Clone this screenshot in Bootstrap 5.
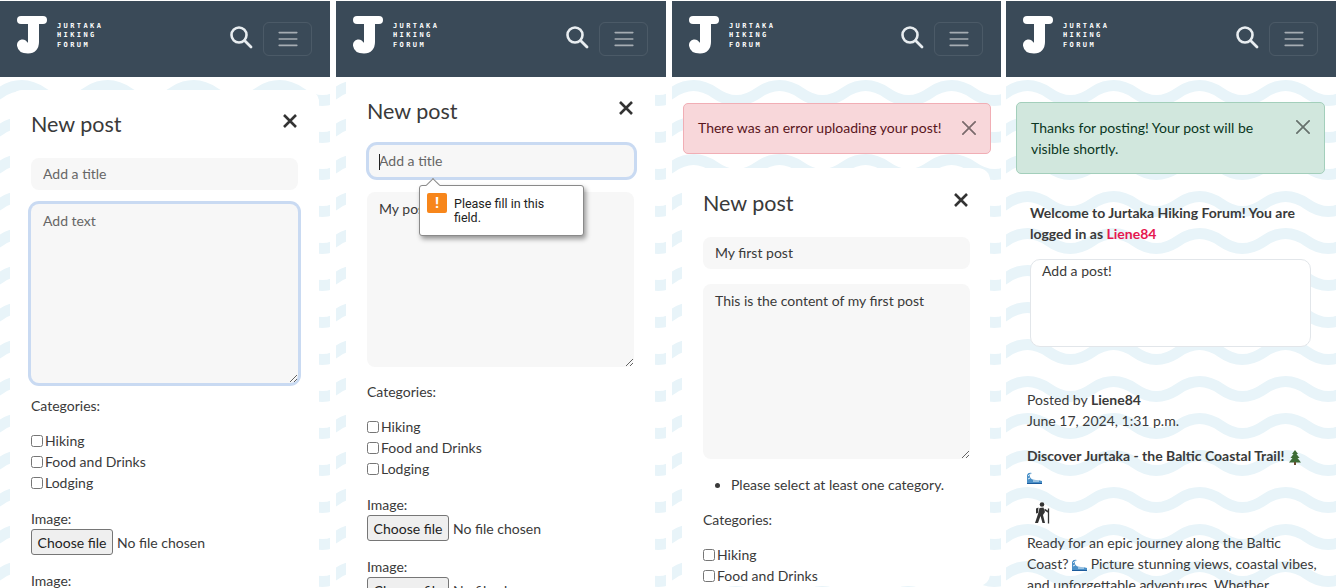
<!DOCTYPE html>
<html lang="en">
<head>
    <meta charset="UTF-8">
    <meta name="viewport" content="width=device-width, initial-scale=1.0">
    <title>Jurtaka Hiking Forum</title>
    <link href="https://cdn.jsdelivr.net/npm/bootstrap@5.3.0/dist/css/bootstrap.min.css" rel="stylesheet">
    <style>
        html, body { height: 588px; overflow: hidden; }
        body { font-family: Lato, "Liberation Sans", sans-serif; font-size: 14px; line-height: 21px; color: #3a3a3a; background: #fff; }
        .shots { display: flex; height: 588px; padding-top: 1px; }
        .phone { width: 330px; flex: none; overflow: hidden; margin-right: 6px; position: relative;
            background-color: #fff;
            background-image: url("data:image/svg+xml,%3Csvg xmlns='http://www.w3.org/2000/svg' width='86' height='37'%3E%3Cpath d='M-43 18C-29 28 -14 28 0 18C14 8 29 8 43 18S72 28 86 18S115 8 129 18' fill='none' stroke='%23e8f4f9' stroke-width='11'/%3E%3C/svg%3E");
            background-position: 0 0; }
        .phone:nth-child(3) { width: 329px; margin-right: 5px; }
        .phone:last-child { margin-right: 0; }
        .topbar { height: 76px; background: #3a4a58; padding: 0 18px 0 17px; }
        .logo-mark { margin-top: -8px; }
        .logo-word { font-family: "DejaVu Sans Mono", monospace; font-weight: 700; font-size: 7px; line-height: 9.5px; letter-spacing: 2.4px; color: #fff; margin: 0 0 6px 8px; }
        .search-btn { margin: 0 10px 4px 0; }
        .menu-btn { font-size: 1rem; width: 49px; padding: 4px 11px; border-color: rgba(255,255,255,.09); border-radius: 6px; }
        .sheet { margin: 13px 11px 0 10px; background: #fff; border-radius: 12px; padding: 21px 21px 0; }
        .sheet-up { margin-top: 0; padding-top: 21px; border-radius: 0; }
        .sheet-low { margin-top: 14px; padding-top: 22px; }
        .sheet-title { font-size: 21.5px; line-height: 26px; font-weight: 400; margin: 0 0 21px; color: #3a3a3a; }
        .sheet-up .sheet-title { margin-bottom: 18px; }
        .sheet-close { margin-top: 2px; }
        .field { background: #f7f7f7; border: 0; border-radius: 8px; font-size: 14px; line-height: 21px; padding: 5px 12px 6px; color: #3a3a3a; height: 32px; width: 267px; }
        .field::placeholder { color: #666; opacity: 1; }
        textarea.field { display: block; resize: vertical; height: 175px; margin-top: 15px; padding-top: 6px; }
        .field-focus { box-shadow: 0 0 0 3px #c9daf2; background: #f7f7f7; }
        .field-text { height: 179px !important; margin: 14px 0 -2px !important; }
        .sheet-up .field-ring { height: 32px; margin: 3px 0 0 2px; width: 265px; padding-left: 10px; }
        .sheet-up textarea.field { margin-top: 15px; }
        .section-label { margin: 14px 0 14px; }
        .cat-row { display: flex; align-items: center; gap: 2px; height: 21px; }
        .cat-row input { margin: 0; width: 12px; height: 12px; }
        .image-row { margin-top: 15px; }
        .file-pick { display: flex; align-items: center; gap: 4px; }
        .file-btn { width: 82px; height: 26px; padding: 0; background: #efefef; border: 1px solid #767676; border-radius: 3px; font-size: 14px; color: #222; }
        .errors { margin: 15px 0 0; padding-left: 28px; }
        .caret-bar { position: absolute; left: 43px; top: 153px; width: 1px; height: 16px; background: #222; z-index: 3; }
        .tip { position: absolute; left: 83px; top: 184px; width: 165px; height: 51px; background: #fff; border: 1px solid #8a8a8a; border-radius: 3px; box-shadow: 2px 3px 5px rgba(0,0,0,.4); font-family: Roboto, "Liberation Sans", sans-serif; font-size: 12.5px; line-height: 14px; color: #222; padding: 11px 30px 0 34px; z-index: 4; }
        .tip::before { content: ""; position: absolute; left: 8px; top: -6px; width: 10px; height: 10px; background: #fff; border-left: 1px solid #8a8a8a; border-top: 1px solid #8a8a8a; transform: rotate(45deg); }
        .tip-mark { position: absolute; left: 7px; top: 7px; width: 20px; height: 20px; background: #f7861b; border-radius: 2px; color: #fff; font-weight: 700; font-size: 15px; line-height: 20px; text-align: center; }
        .note { border-radius: 5px; font-size: 14px; line-height: 21px; margin: 0; padding: 13px 48px 15px 14px; }
        .note-red { margin: 26px 10px 0 11px; color: #58151c; }
        .note-green { margin: 25px 11px 0 10px; padding-top: 14px; padding-bottom: 14px; color: #0a3622; }
        .note .btn-close { padding: 17px 14px; font-size: 14px; }
        .feed { padding: 0 14px 0 21px; }
        .welcome { margin: 28px 0 0 3px; font-weight: 700; width: 280px; }
        .welcome span { color: #e6174f; }
        .post-box { display: block; background: #fff; border: 1px solid #e2e6ea; border-radius: 10px; width: 281px; height: 88px; margin: 15px 0 42px 3px; padding: 0 11px; resize: none; font-size: 14px; }
        .post-box::placeholder { color: #3a3a3a; opacity: 1; }
        .post-text { margin: 0; width: 290px; }
        .post-title { margin: 14px 0 0; font-weight: 700; width: 290px; }
        .hiker { display: block; margin: 15px 0 8px 7px; }
    </style>
</head>
<body>
    <div class="shots">
        <!-- empty form -->
        <div class="phone">
            <nav class="topbar d-flex align-items-center navbar-dark">
                <svg class="logo-mark" width="32" height="38" viewBox="0 0 32 38"><path d="M4 4H26" stroke="#fff" stroke-width="8" stroke-linecap="round"/><path d="M16.500 6V26Q16.500 32 11 32Q6 32 5.500 29" fill="none" stroke="#fff" stroke-width="11" stroke-linecap="round"/></svg>
                <div class="logo-word">JURTAKA<br>HIKING<br>FORUM</div>
                <svg class="search-btn ms-auto" width="24" height="24" viewBox="0 0 24 24"><circle cx="10" cy="10" r="7.500" fill="none" stroke="#e8edf0" stroke-width="2.600"/><path d="M15.500 15.500L22 22" stroke="#e8edf0" stroke-width="2.800" stroke-linecap="round"/></svg>
                <button class="navbar-toggler menu-btn" type="button"><span class="navbar-toggler-icon"></span></button>
            </nav>
            <div class="sheet">
                <div class="d-flex justify-content-between align-items-start">
                    <h2 class="sheet-title">New post</h2>
                    <svg class="sheet-close" width="16" height="16" viewBox="0 0 16 16"><path d="M2 2L14 14M14 2L2 14" stroke="#333" stroke-width="2.600"/></svg>
                </div>
                <input class="field" placeholder="Add a title">
                <textarea class="field field-focus field-text" placeholder="Add text"></textarea>
                <div class="section-label">Categories:</div>
                <label class="cat-row"><input type="checkbox">Hiking</label>
                <label class="cat-row"><input type="checkbox">Food and Drinks</label>
                <label class="cat-row"><input type="checkbox">Lodging</label>
                <div class="image-row">Image:<div class="file-pick"><button type="button" class="file-btn">Choose file</button>No file chosen</div></div>
                <div class="image-row">Image:<div class="file-pick"><button type="button" class="file-btn">Choose file</button>No file chosen</div></div>
            </div>
        </div>

        <!-- browser validation tooltip -->
        <div class="phone">
            <nav class="topbar d-flex align-items-center navbar-dark">
                <svg class="logo-mark" width="32" height="38" viewBox="0 0 32 38"><path d="M4 4H26" stroke="#fff" stroke-width="8" stroke-linecap="round"/><path d="M16.500 6V26Q16.500 32 11 32Q6 32 5.500 29" fill="none" stroke="#fff" stroke-width="11" stroke-linecap="round"/></svg>
                <div class="logo-word">JURTAKA<br>HIKING<br>FORUM</div>
                <svg class="search-btn ms-auto" width="24" height="24" viewBox="0 0 24 24"><circle cx="10" cy="10" r="7.500" fill="none" stroke="#e8edf0" stroke-width="2.600"/><path d="M15.500 15.500L22 22" stroke="#e8edf0" stroke-width="2.800" stroke-linecap="round"/></svg>
                <button class="navbar-toggler menu-btn" type="button"><span class="navbar-toggler-icon"></span></button>
            </nav>
            <div class="sheet sheet-up">
                <div class="d-flex justify-content-between align-items-start">
                    <h2 class="sheet-title">New post</h2>
                    <svg class="sheet-close" width="16" height="16" viewBox="0 0 16 16"><path d="M2 2L14 14M14 2L2 14" stroke="#333" stroke-width="2.600"/></svg>
                </div>
                <input class="field field-ring field-focus" placeholder="Add a title">
                <textarea class="field">My post</textarea>
                <div class="section-label">Categories:</div>
                <label class="cat-row"><input type="checkbox">Hiking</label>
                <label class="cat-row"><input type="checkbox">Food and Drinks</label>
                <label class="cat-row"><input type="checkbox">Lodging</label>
                <div class="image-row">Image:<div class="file-pick"><button type="button" class="file-btn">Choose file</button>No file chosen</div></div>
                <div class="image-row">Image:<div class="file-pick"><button type="button" class="file-btn">Choose file</button>No file chosen</div></div>
            </div>
            <span class="caret-bar"></span>
            <div class="tip"><span class="tip-mark">!</span>Please fill in this field.</div>
        </div>

        <!-- upload error -->
        <div class="phone">
            <nav class="topbar d-flex align-items-center navbar-dark">
                <svg class="logo-mark" width="32" height="38" viewBox="0 0 32 38"><path d="M4 4H26" stroke="#fff" stroke-width="8" stroke-linecap="round"/><path d="M16.500 6V26Q16.500 32 11 32Q6 32 5.500 29" fill="none" stroke="#fff" stroke-width="11" stroke-linecap="round"/></svg>
                <div class="logo-word">JURTAKA<br>HIKING<br>FORUM</div>
                <svg class="search-btn ms-auto" width="24" height="24" viewBox="0 0 24 24"><circle cx="10" cy="10" r="7.500" fill="none" stroke="#e8edf0" stroke-width="2.600"/><path d="M15.500 15.500L22 22" stroke="#e8edf0" stroke-width="2.800" stroke-linecap="round"/></svg>
                <button class="navbar-toggler menu-btn" type="button"><span class="navbar-toggler-icon"></span></button>
            </nav>
            <div class="alert alert-danger alert-dismissible note note-red">There was an error uploading your post!<button type="button" class="btn-close"></button></div>
            <div class="sheet sheet-low">
                <div class="d-flex justify-content-between align-items-start">
                    <h2 class="sheet-title">New post</h2>
                    <svg class="sheet-close" width="16" height="16" viewBox="0 0 16 16"><path d="M2 2L14 14M14 2L2 14" stroke="#333" stroke-width="2.600"/></svg>
                </div>
                <input class="field" value="My first post">
                <textarea class="field">This is the content of my first post</textarea>
                <ul class="errors"><li>Please select at least one category.</li></ul>
                <div class="section-label">Categories:</div>
                <label class="cat-row"><input type="checkbox">Hiking</label>
                <label class="cat-row"><input type="checkbox">Food and Drinks</label>
            </div>
        </div>

        <!-- posted ok, back on the feed -->
        <div class="phone">
            <nav class="topbar d-flex align-items-center navbar-dark">
                <svg class="logo-mark" width="32" height="38" viewBox="0 0 32 38"><path d="M4 4H26" stroke="#fff" stroke-width="8" stroke-linecap="round"/><path d="M16.500 6V26Q16.500 32 11 32Q6 32 5.500 29" fill="none" stroke="#fff" stroke-width="11" stroke-linecap="round"/></svg>
                <div class="logo-word">JURTAKA<br>HIKING<br>FORUM</div>
                <svg class="search-btn ms-auto" width="24" height="24" viewBox="0 0 24 24"><circle cx="10" cy="10" r="7.500" fill="none" stroke="#e8edf0" stroke-width="2.600"/><path d="M15.500 15.500L22 22" stroke="#e8edf0" stroke-width="2.800" stroke-linecap="round"/></svg>
                <button class="navbar-toggler menu-btn" type="button"><span class="navbar-toggler-icon"></span></button>
            </nav>
            <div class="alert alert-success alert-dismissible note note-green">Thanks for posting! Your post will be visible shortly.<button type="button" class="btn-close"></button></div>
            <div class="feed">
                <p class="welcome">Welcome to Jurtaka Hiking Forum! You are logged in as <span>Liene84</span></p>
                <textarea class="post-box" placeholder="Add a post!"></textarea>
                <p class="post-text">Posted by <b>Liene84</b><br>June 17, 2024, 1:31 p.m.</p>
                <p class="post-title">Discover Jurtaka - the Baltic Coastal Trail!
                    <svg width="14" height="15" viewBox="0 0 14 15"><path d="M7 0L10 4H8.500L11.500 8H9.500L13 12.500H1L4.500 8H2.500L5.500 4H4Z" fill="#3c6b35"/><rect x="6" y="12" width="2" height="3" fill="#6b4a2f"/></svg>
                    <svg width="15" height="12" viewBox="0 0 15 12"><path d="M0 12V3Q1 0 5 1Q2 2 3 5Q4 8 9 8Q12 8 15 9V12Z" fill="#4a90c8"/><path d="M1 4Q3 2 4 2M1 7L3 6M6 9H12" stroke="#e8f2f8" stroke-width="1" fill="none"/><path d="M0 11H15V12H0Z" fill="#1b5b9c"/></svg>
                </p>
                <svg class="hiker" width="16" height="22" viewBox="0 0 16 22"><circle cx="8" cy="2.500" r="2.300" fill="#333"/><path d="M2 6.500L4.500 5.500L4 11L2 11.500ZM5.500 6L9.500 5.500L11 10L9 13L11 21H8.500L6.500 14L4 21H1L4 12Z" fill="#333"/><path d="M14.500 6.500V21.500" stroke="#333" stroke-width="1.300"/><path d="M10.500 7.500L14.500 10" stroke="#333" stroke-width="1.500"/></svg>
                <p class="post-text">Ready for an epic journey along the Baltic Coast?
                    <svg width="15" height="12" viewBox="0 0 15 12"><path d="M0 12V3Q1 0 5 1Q2 2 3 5Q4 8 9 8Q12 8 15 9V12Z" fill="#4a90c8"/><path d="M1 4Q3 2 4 2M1 7L3 6M6 9H12" stroke="#e8f2f8" stroke-width="1" fill="none"/><path d="M0 11H15V12H0Z" fill="#1b5b9c"/></svg>
                    Picture stunning views, coastal vibes, and unforgettable adventures. Whether</p>
            </div>
        </div>
    </div>
    <script src="https://cdn.jsdelivr.net/npm/bootstrap@5.3.0/dist/js/bootstrap.bundle.min.js"></script>
</body>
</html>
